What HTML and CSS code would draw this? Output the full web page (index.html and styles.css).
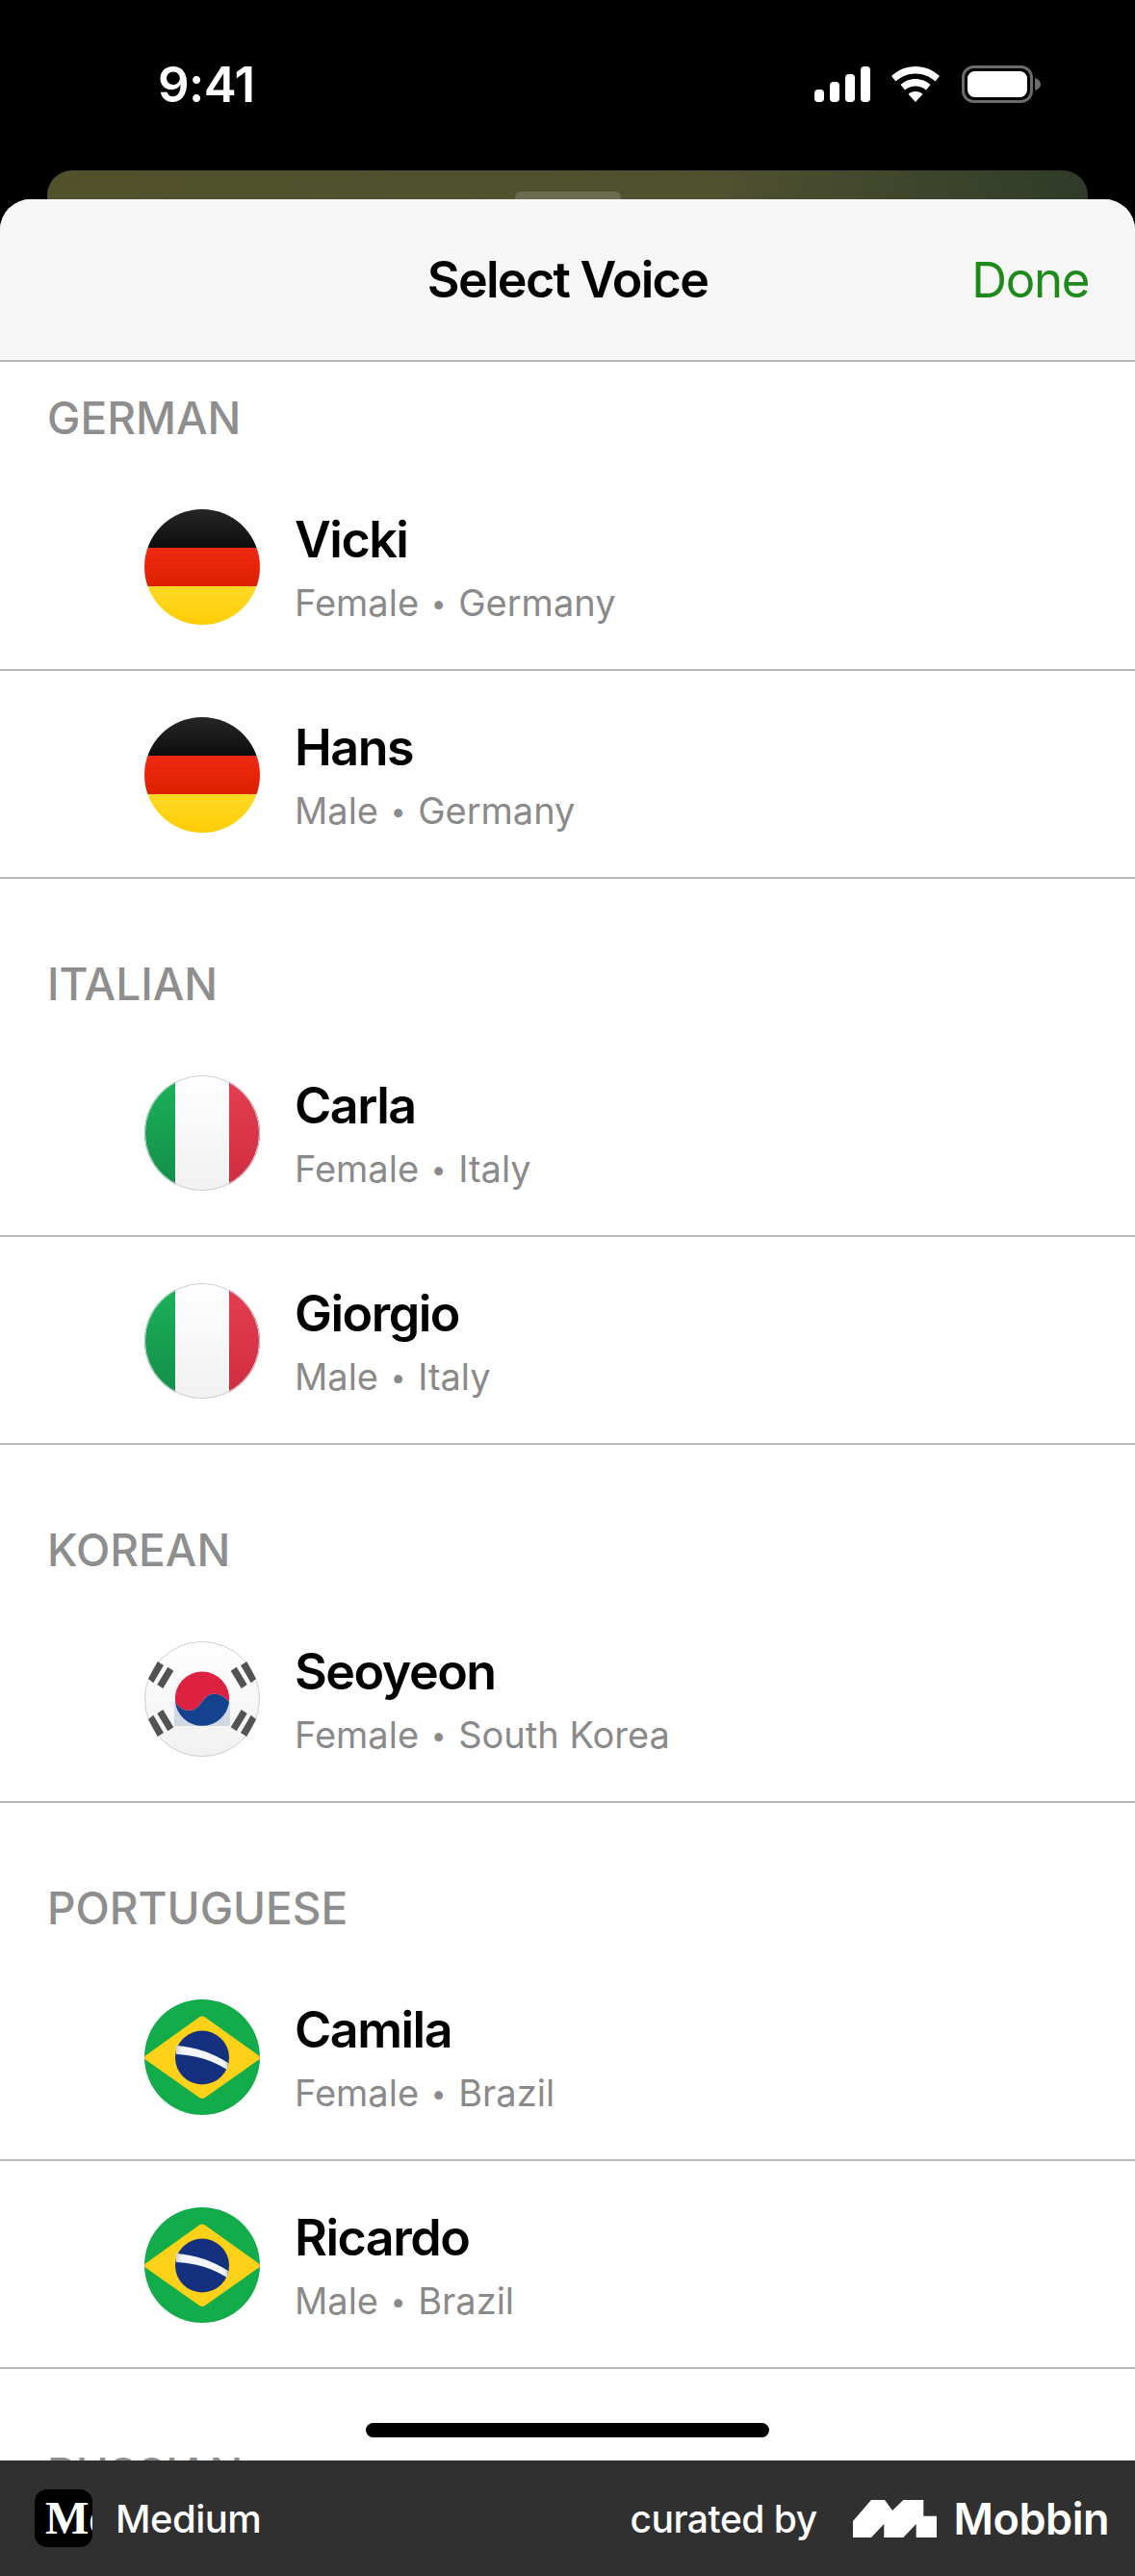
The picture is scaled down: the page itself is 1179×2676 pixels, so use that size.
FILE: index.html
```html
<!DOCTYPE html>
<html lang="en">
<head>
<meta charset="utf-8">
<title>Select Voice</title>
<link rel="stylesheet" href="styles.css">
</head>
<body>
<svg class="defs" aria-hidden="true">
  <defs>
    <linearGradient id="gBlack" x1="0" y1="0" x2="0" y2="1"><stop offset="0" stop-color="#262626"/><stop offset="1" stop-color="#0e0e0e"/></linearGradient>
    <linearGradient id="gRed" x1="0" y1="0" x2="0" y2="1"><stop offset="0" stop-color="#ef2a12"/><stop offset="1" stop-color="#dd2000"/></linearGradient>
    <linearGradient id="gGold" x1="0" y1="0" x2="0" y2="1"><stop offset="0" stop-color="#ffd926"/><stop offset="1" stop-color="#ffcd06"/></linearGradient>
    <linearGradient id="gIg" x1="0" y1="0" x2="0" y2="1"><stop offset="0" stop-color="#1cb25a"/><stop offset="1" stop-color="#138d49"/></linearGradient>
    <linearGradient id="gIw" x1="0" y1="0" x2="0" y2="1"><stop offset="0" stop-color="#ffffff"/><stop offset="1" stop-color="#f1f1f1"/></linearGradient>
    <linearGradient id="gIr" x1="0" y1="0" x2="0" y2="1"><stop offset="0" stop-color="#e53e52"/><stop offset="1" stop-color="#cf2c40"/></linearGradient>
    <linearGradient id="gStripe" x1="0" y1="0" x2="1" y2="0"><stop offset="0" stop-color="#c9d2e8"/><stop offset="0.12" stop-color="#f4f6fb"/><stop offset="0.9" stop-color="#f4f6fb"/><stop offset="1" stop-color="#c9d2e8"/></linearGradient>
    <clipPath id="cFlag"><circle cx="60" cy="60" r="60"/></clipPath>
    <path id="kr-bars" d="M13.700 21 20 25 9.300 43.300 4 39zM24.300 26.700 30.300 30.700 19.300 49 13.300 45z"/>
    <symbol id="flag-de" viewBox="0 0 120 120">
      <g clip-path="url(#cFlag)">
        <rect width="120" height="40" fill="url(#gBlack)"/>
        <rect y="40" width="120" height="40" fill="url(#gRed)"/>
        <rect y="80" width="120" height="40" fill="url(#gGold)"/>
      </g>
    </symbol>
    <symbol id="flag-it" viewBox="0 0 120 120">
      <g clip-path="url(#cFlag)">
        <rect width="32" height="120" fill="url(#gIg)"/>
        <rect x="32" width="56" height="120" fill="url(#gIw)"/>
        <rect x="88" width="32" height="120" fill="url(#gIr)"/>
      </g>
      <circle cx="60" cy="60" r="59.500" fill="none" stroke="#cfcfcf"/>
    </symbol>
    <symbol id="flag-kr" viewBox="0 0 120 120">
      <circle cx="60" cy="60" r="60" fill="url(#gIw)"/>
      <circle cx="60" cy="60" r="59.500" fill="none" stroke="#cfcfcf"/>
      <rect x="31" y="63" width="58" height="25" fill="#14428f" opacity="0.16"/>
      <path d="M32 63A28.200 28.200 0 1 1 88 63C82 56 76 54 70 55 60 57 58 72 47 72 40 72 35 68 32 63z" fill="#dd2141"/>
      <path d="M32 63C35 68 40 72 47 72 58 72 60 57 70 55 76 54 82 56 88 63A28.200 28.200 0 0 1 32 63z" fill="#14428f"/>
      <g fill="#535353">
        <use href="#kr-bars"/>
        <use href="#kr-bars" transform="matrix(-1 0 0 1 120 0)"/>
        <use href="#kr-bars" transform="matrix(1 0 0 -1 0 120)"/>
        <use href="#kr-bars" transform="matrix(-1 0 0 -1 120 120)"/>
      </g>
    </symbol>
    <symbol id="flag-br" viewBox="0 0 120 120">
      <circle cx="60" cy="60" r="60" fill="#12ac4b"/>
      <path d="M57 18.500q3-2 6 0l56 40q2 2 0 4l-56 39.500q-3 2-6 0L1 62.500q-2-2 0-4z" fill="#fdd117"/>
      <circle cx="60" cy="60.500" r="28" fill="#14307f"/>
      <path d="M33 48Q62 50 87 66L86 73Q62 58 33 57z" fill="url(#gStripe)"/>
    </symbol>
  </defs>
</svg>
<div class="screen">
  <header class="status">
    <span class="time">9:41</span>
    <div class="status-icons">
      <svg class="ic-signal" viewBox="0 0 58 37"><g fill="#fff"><rect x="0" y="24" width="10" height="13" rx="4"/><rect x="16" y="16" width="10" height="21" rx="4"/><rect x="32" y="8" width="10" height="29" rx="4"/><rect x="48" y="0" width="10" height="37" rx="4"/></g></svg>
      <svg class="ic-wifi" viewBox="0 0 50 37"><g fill="#fff"><path d="M25 0c9.500 0 18 3.500 25 10l-4.500 5.500C40 10.500 33 7.500 25 7.500S10 10.500 4.500 15.500L0 10C7 3.500 15.500 0 25 0z"/><path d="M25 13c6 0 11.500 2.300 15.500 6L36 24.500c-3-2.500-7-4-11-4s-8 1.500-11 4L9.500 19c4-3.700 9.500-6 15.500-6z"/><path d="M25 26c3 0 5.500 1 7.500 2.800L25 37l-7.500-8.200C19.500 27 22 26 25 26z"/></g></svg>
      <svg class="ic-battery" viewBox="0 0 82 39"><rect x="1.500" y="1.500" width="71" height="36" rx="11" fill="none" stroke="#6b6b6b" stroke-width="3"/><rect x="6" y="6" width="62" height="27" rx="7.500" fill="#fff"/><path d="M76 13c3 1 6 3 6 6.500S79 25 76 26z" fill="#6b6b6b"/></svg>
    </div>
  </header>
  <div class="under-card"><span class="under-handle"></span></div>
  <main class="sheet">
    <div class="nav">
      <h1 class="nav-title">Select Voice</h1>
      <span class="nav-done">Done</span>
    </div>
    <div class="list">
      <h2 class="label label-first">GERMAN</h2>
      <div class="row"><svg class="flag"><use href="#flag-de"/></svg><div class="info"><div class="name">Vicki</div><div class="sub">Female <i class="dot">•</i> Germany</div></div></div>
      <div class="row"><svg class="flag"><use href="#flag-de"/></svg><div class="info"><div class="name">Hans</div><div class="sub">Male <i class="dot">•</i> Germany</div></div></div>
      <h2 class="label">ITALIAN</h2>
      <div class="row"><svg class="flag"><use href="#flag-it"/></svg><div class="info"><div class="name">Carla</div><div class="sub">Female <i class="dot">•</i> Italy</div></div></div>
      <div class="row"><svg class="flag"><use href="#flag-it"/></svg><div class="info"><div class="name">Giorgio</div><div class="sub">Male <i class="dot">•</i> Italy</div></div></div>
      <h2 class="label">KOREAN</h2>
      <div class="row"><svg class="flag"><use href="#flag-kr"/></svg><div class="info"><div class="name">Seoyeon</div><div class="sub">Female <i class="dot">•</i> South Korea</div></div></div>
      <h2 class="label">PORTUGUESE</h2>
      <div class="row"><svg class="flag"><use href="#flag-br"/></svg><div class="info"><div class="name">Camila</div><div class="sub">Female <i class="dot">•</i> Brazil</div></div></div>
      <div class="row"><svg class="flag"><use href="#flag-br"/></svg><div class="info"><div class="name">Ricardo</div><div class="sub">Male <i class="dot">•</i> Brazil</div></div></div>
      <h2 class="label">RUSSIAN</h2>
    </div>
    <span class="home-bar"></span>
  </main>
  <footer class="footer">
    <div class="app">
      <span class="app-icon"><span class="app-icon-text">Me</span></span>
      <span class="app-name">Medium</span>
    </div>
    <div class="credit">
      <span class="curated">curated by</span>
      <svg class="mobbin-mark" viewBox="0 0 87 39"><path d="M0 39V22L19 0H33L41 11 52.300 0H73.300V16.700H87V39H65.700V25L52.300 39H32.300V25L19 39z" fill="#fff"/></svg>
      <span class="mobbin">Mobbin</span>
    </div>
  </footer>
</div>
</body>
</html>
```

FILE: styles.css
```css
* { box-sizing: border-box; }
html, body { margin: 0; padding: 0; background: #000; }
body { width: 1179px; height: 2676px; overflow: hidden; font-family: Inter, "Liberation Sans", sans-serif; }
.defs { display: block; width: 0; height: 0; overflow: hidden; }
.screen { width: 1179px; height: 2676px; display: flex; flex-direction: column; background: #000; overflow: hidden; }

.status { height: 177px; flex: none; display: flex; justify-content: space-between; align-items: flex-start; padding: 63px 98px 0 164px; }
.time { color: #fff; font-size: 51px; font-weight: 600; line-height: 50px; letter-spacing: -0.6px; }
.status-icons { display: flex; align-items: center; gap: 22px; margin-top: 5px; }
.ic-signal { width: 58px; height: 37px; display: block; }
.ic-wifi { width: 50px; height: 37px; display: block; }
.ic-battery { width: 82px; height: 39px; display: block; margin-left: 1px; }

.under-card { flex: none; height: 30px; margin: 0 49px; padding-top: 22px; border-radius: 26px 26px 0 0; background: linear-gradient(90deg, #51512c 0%, #4f5130 65%, #2f3b28 100%); display: flex; justify-content: center; }
.under-handle { width: 110px; height: 8px; border-radius: 6px 6px 0 0; background: #6b6b4f; }

.sheet { flex: 1; min-height: 0; display: flex; flex-direction: column; background: #fff; border-radius: 32px 32px 0 0; overflow: hidden; position: relative; }
.nav { flex: none; height: 169px; padding: 0 48px 0 0; border-bottom: 2px solid #b8b8b8; background: #f6f6f6; display: flex; align-items: center; justify-content: flex-end; position: relative; }
.nav-title { margin: 0; position: absolute; left: 0; right: 0; text-align: center; font-size: 52px; font-weight: 600; color: #000; letter-spacing: -1.7px; }
.nav-done { font-size: 51px; font-weight: 400; color: #1e8a1c; letter-spacing: -1.4px; }

.list { flex: 1; min-height: 0; overflow: hidden; }
.label { margin: 0; height: 156px; padding: 0 49px 30px; display: flex; align-items: flex-end; font-size: 46px; line-height: 34px; font-weight: 500; color: #8e8e8e; }
.label-first { height: 105px; }
.row { height: 216px; display: flex; align-items: center; gap: 36px; padding: 2px 0 0 150px; border-bottom: 2px solid #b8b8b8; }
.flag { width: 120px; height: 120px; flex: none; display: block; }
.info { display: flex; flex-direction: column; gap: 12px; margin-top: 2px; }
.name { font-size: 52px; line-height: 60px; font-weight: 600; color: #000; letter-spacing: -1.5px; }
.sub { font-size: 38px; line-height: 46px; font-weight: 400; color: #8a8a8a; }
.dot { font-style: normal; font-size: 28px; margin: 0 2px; vertical-align: 3px; }

.home-bar { position: absolute; left: 380px; bottom: 24px; width: 419px; height: 15px; border-radius: 8px; background: #000; }

.footer { flex: none; height: 120px; background: #303030; display: flex; align-items: center; justify-content: space-between; padding: 0 27px 0 36px; }
.app { display: flex; align-items: center; gap: 24px; }
.app-icon { width: 60px; height: 60px; border-radius: 13px; background: #000; overflow: hidden; display: flex; align-items: center; padding-left: 11px; }
.app-icon-text { color: #fff; font-family: "Liberation Serif", serif; font-weight: 700; font-size: 48px; line-height: 60px; white-space: nowrap; }
.app-name { color: #fff; font-size: 40px; font-weight: 500; letter-spacing: -0.5px; }
.credit { display: flex; align-items: center; }
.curated { color: #fff; font-size: 39px; font-weight: 500; letter-spacing: -0.5px; margin-right: 37px; }
.mobbin-mark { width: 87px; height: 39px; display: block; margin-right: 18px; }
.mobbin { color: #fff; font-size: 45px; font-weight: 600; letter-spacing: -0.5px; }
```
